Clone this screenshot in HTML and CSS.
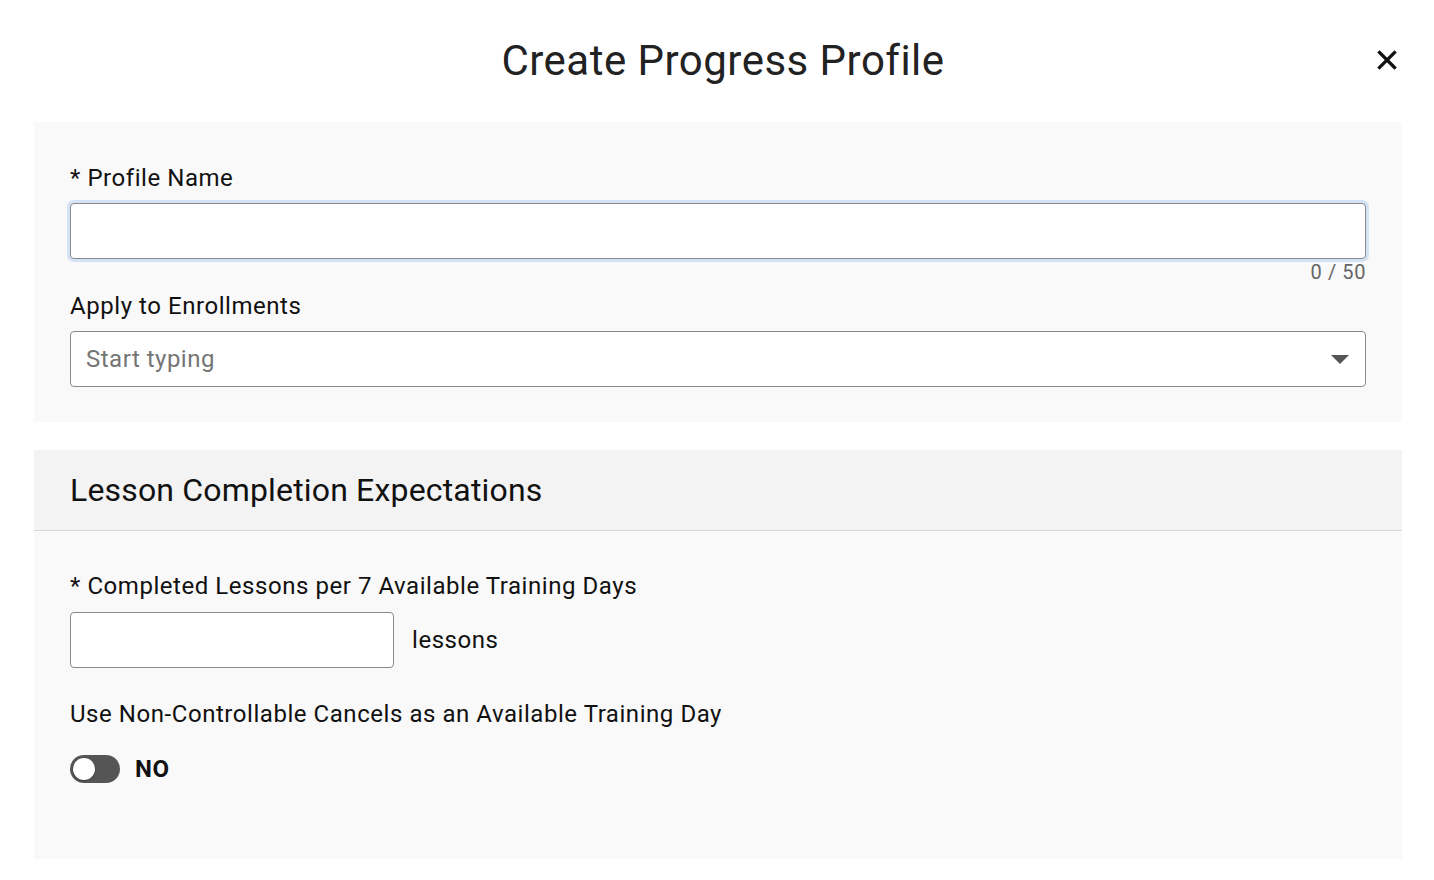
FILE: index.html
```html
<!DOCTYPE html>
<html lang="en">
<head>
<meta charset="utf-8">
<title>Create Progress Profile</title>
<link rel="stylesheet" href="styles.css">
</head>
<body>
<div class="modal">
  <header class="modal-header">
    <h1 class="modal-title">Create Progress Profile</h1>
    <button class="close-btn" aria-label="Close">
      <svg width="20" height="20" viewBox="0 0 20 20"><path d="M2.5 2.5 L17.5 17.5 M17.5 2.5 L2.5 17.5" stroke="#111" stroke-width="3.2" stroke-linecap="square"/></svg>
    </button>
  </header>

  <section class="panel panel-basic">
    <label class="field-label">* Profile Name</label>
    <input class="text-input focused" type="text">
    <div class="counter">0 / 50</div>
    <label class="field-label label-spaced">Apply to Enrollments</label>
    <div class="select">
      <span class="placeholder">Start typing</span>
      <svg class="caret" width="18" height="10" viewBox="0 0 18 10"><path d="M0 0 H18 L9 9 Z" fill="#555"/></svg>
    </div>
  </section>

  <section class="panel panel-lessons">
    <div class="panel-head">Lesson Completion Expectations</div>
    <div class="panel-body">
      <label class="field-label">* Completed Lessons per 7 Available Training Days</label>
      <div class="inline-row">
        <input class="text-input small-input" type="text">
        <span class="unit">lessons</span>
      </div>
      <label class="field-label label-toggle">Use Non-Controllable Cancels as an Available Training Day</label>
      <div class="toggle-row">
        <span class="toggle"><span class="knob"></span></span>
        <span class="toggle-text">NO</span>
      </div>
    </div>
  </section>
</div>
</body>
</html>
```

FILE: styles.css
```css
* { box-sizing: border-box; }
html, body { margin: 0; padding: 0; background: #fff; }
body {
  font-family: Roboto, "Liberation Sans", Arial, sans-serif;
  color: #111;
  width: 1434px;
  height: 880px;
  overflow: hidden;
}
.modal { padding: 0 32px 0 34px; }
.modal-header {
  height: 122px;
  display: flex;
  align-items: center;
  justify-content: center;
  position: relative;
  padding-left: 10px;
}
.modal-title {
  margin: 0;
  font-size: 42px;
  font-weight: 400;
  color: #222;
  line-height: 50px;
  letter-spacing: 0.48px;
}
.close-btn {
  position: absolute;
  right: 5px;
  top: 50px;
  border: 0;
  background: transparent;
  padding: 0;
  width: 20px;
  height: 20px;
  cursor: pointer;
}
.close-btn svg { display: block; }
.panel { background: #f9f9f9; }
.panel-basic {
  padding: 42px 36px 35px;
  display: flex;
  flex-direction: column;
}
.field-label {
  display: block;
  font-size: 24px;
  line-height: 28px;
  margin-bottom: 11px;
  color: #111;
  letter-spacing: 0.55px;
}
.label-spaced { margin-top: 8px; }
.text-input {
  display: block;
  width: 100%;
  height: 56px;
  border: 1px solid #8a8a8a;
  border-radius: 4px;
  background: #fff;
  font: inherit;
  font-size: 22px;
  padding: 0 16px;
  outline: none;
}
.text-input.focused { box-shadow: 0 0 0 3px #d3e3f5; }
.counter {
  text-align: right;
  font-size: 20px;
  line-height: 24px;
  color: #666;
  margin-top: 1px;
  letter-spacing: 0.6px;
}
.select {
  height: 56px;
  border: 1px solid #8a8a8a;
  border-radius: 4px;
  background: #fff;
  display: flex;
  align-items: center;
  justify-content: space-between;
  padding: 0 16px 0 15px;
}
.placeholder { font-size: 24px; color: #757575; letter-spacing: 0.5px; }
.caret { display: block; margin-top: 1px; }
.panel-lessons { margin-top: 28px; }
.panel-head {
  height: 81px;
  background: #f3f3f3;
  border-bottom: 1px solid #d8d8d8;
  display: flex;
  align-items: center;
  padding: 0 36px;
  font-size: 32px;
  color: #111;
  letter-spacing: 0.17px;
}
.panel-body {
  padding: 41px 36px 76px;
}
.panel-body > .field-label:first-child { margin-bottom: 12px; }
.inline-row {
  display: flex;
  align-items: center;
  gap: 18px;
}
.small-input { width: 324px; }
.unit { font-size: 24px; color: #111; letter-spacing: 0.55px; }
.label-toggle { margin-top: 32px; margin-bottom: 27px; }
.toggle-row {
  display: flex;
  align-items: center;
  gap: 15px;
}
.toggle {
  width: 50px;
  height: 28px;
  border-radius: 14px;
  background: #555;
  display: flex;
  align-items: center;
  padding: 0 3px;
}
.knob {
  width: 22px;
  height: 22px;
  border-radius: 50%;
  background: #fff;
  box-shadow: 0 1px 2px rgba(0,0,0,0.3);
}
.toggle-text {
  font-size: 24px;
  font-weight: 700;
  color: #111;
  letter-spacing: 0.6px;
}
```
